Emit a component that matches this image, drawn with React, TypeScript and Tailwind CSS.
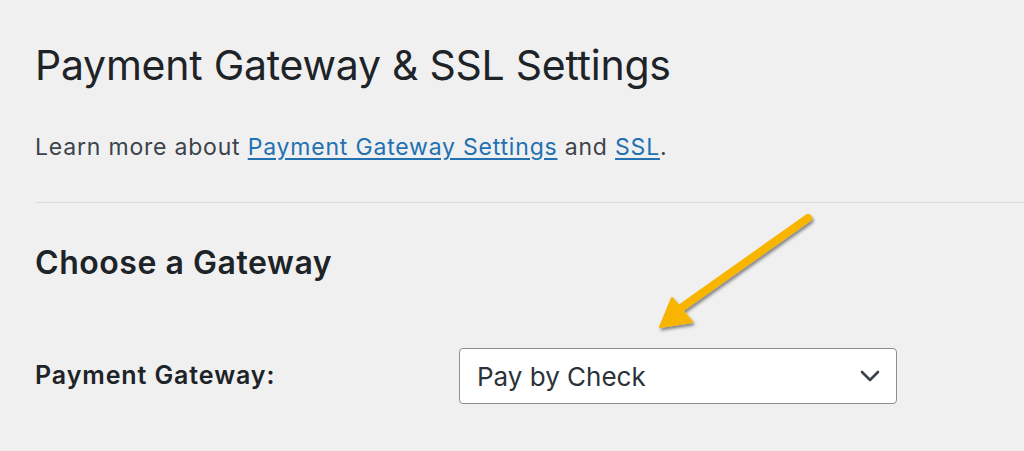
export default function App() {
  return (
    <div className="relative h-[451px] w-full overflow-hidden bg-[#f0f0f1] font-['Inter',sans-serif]">
      <div className="pl-[35px] pt-[40px]">
        <h1 className="text-[41px] leading-[50px] tracking-[-0.25px] text-[#1d2327]">Payment Gateway &amp; SSL Settings</h1>
        <p className="mt-[42px] text-[23px] leading-[30px] tracking-[0.8px] text-[#3c434a]">
          Learn more about{" "}
          <a href="#" className="text-[#2271b1] underline underline-offset-[3px]">
            Payment Gateway Settings
          </a>{" "}
          and{" "}
          <a href="#" className="text-[#2271b1] underline underline-offset-[3px]">
            SSL
          </a>
          .
        </p>
        <div className="mt-[40px] border-t border-[#dcdcde]" />
        <h2 className="mt-[40px] text-[32px] font-semibold leading-[40px] tracking-[0.55px] text-[#1d2327]">Choose a Gateway</h2>
        <div className="mt-[65px] flex items-center">
          <label className="w-[424px] text-[25px] font-semibold tracking-[0.9px] text-[#1d2327]">Payment Gateway:</label>
          <div className="flex h-[56px] w-[438px] items-center justify-between rounded-[4px] border border-[#8c8f94] bg-white pl-[17px] pr-[16px]">
            <span className="text-[26px] text-[#2c3338]">Pay by Check</span>
            <svg width="20" height="12" viewBox="0 0 20 12" fill="none">
              <path d="M2 2l8 8 8-8" stroke="#3c434a" strokeWidth="2.6" strokeLinecap="round" strokeLinejoin="round" />
            </svg>
          </div>
        </div>
      </div>
      <svg className="absolute left-0 top-0" width="1024" height="451" viewBox="0 0 1024 451">
        <defs>
          <filter id="sh" x="-20%" y="-20%" width="140%" height="140%">
            <feDropShadow dx="1.5" dy="2.5" stdDeviation="1.6" floodColor="#000" floodOpacity="0.45" />
          </filter>
        </defs>
        <g filter="url(#sh)">
          <path d="M808 218L671 315" stroke="#f7b500" strokeWidth="8" strokeLinecap="round" />
          <path d="M660 327L672 298L692 322Z" fill="#f7b500" stroke="#f7b500" strokeWidth="2" strokeLinejoin="round" />
        </g>
      </svg>
    </div>
  );
}
